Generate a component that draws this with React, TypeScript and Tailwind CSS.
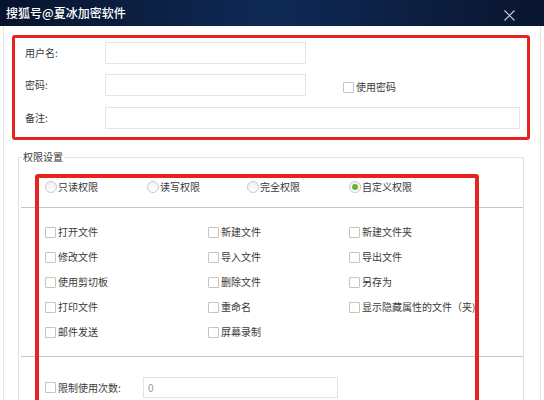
import React from "react";

const font = { fontFamily: '"Noto Sans CJK SC", "Noto Sans", sans-serif' };

function Box() {
  return <span className="inline-block w-[11px] h-[11px] border border-[#c4c4c4] bg-white shrink-0 rounded-[1px]" />;
}

function Check({ label }: { label: string }) {
  return (
    <label className="flex items-center gap-[2px] text-[10px] leading-[14px] text-[#3a3a3a]">
      <Box />
      <span>{label}</span>
    </label>
  );
}

function Radio({ label, checked = false }: { label: string; checked?: boolean }) {
  return (
    <label className="flex items-center gap-[1px] text-[10px] leading-[14px] text-[#3a3a3a]">
      <span className="w-[12px] h-[12px] rounded-full border border-[#c8c8c8] bg-gradient-to-b from-[#f2f2f2] to-white flex items-center justify-center shrink-0">
        {checked && <span className="w-[6px] h-[6px] rounded-full bg-[#6bb03f]" />}
      </span>
      <span>{label}</span>
    </label>
  );
}

const rows: string[][] = [
  ["打开文件", "新建文件", "新建文件夹"],
  ["修改文件", "导入文件", "导出文件"],
  ["使用剪切板", "删除文件", "另存为"],
  ["打印文件", "重命名", "显示隐藏属性的文件（夹)"],
  ["邮件发送", "屏幕录制", ""],
];

export default function App() {
  return (
    <div className="w-[544px] h-[400px] overflow-hidden bg-white" style={font}>
      {/* title bar */}
      <div className="h-[26px] flex items-center justify-between pl-[6px] pr-[29px] bg-gradient-to-r from-[#08142d] via-[#0f2a57] to-[#09152e]">
        <span className="text-white text-[12px] leading-[14px] font-medium">搜狐号@夏冰加密软件</span>
        <svg width="11" height="11" viewBox="0 0 11 11" className="mt-[4px]">
          <path d="M0.5 0.5 L10.5 10.5 M10.5 0.5 L0.5 10.5" stroke="#c9d1dc" strokeWidth="1.1" />
        </svg>
      </div>

      {/* body */}
      <div className="relative mx-[3px] h-[374px] pt-[9px] border-x border-[#e6e6e6]">
        {/* account fields (highlighted) */}
        <div className="ml-[8px] w-[518px] h-[105px] border-[3px] border-[#e6231e] rounded-[3px] pl-[10px] pt-[4px]">
          <div className="flex items-center">
            <span className="w-[80px] text-[10px] leading-[14px] text-[#3a3a3a]">用户名:</span>
            <div className="w-[201px] h-[22px] border border-[#e4e4e4]" />
          </div>
          <div className="flex items-center mt-[10px]">
            <span className="w-[80px] text-[10px] leading-[14px] text-[#3a3a3a]">密码:</span>
            <div className="w-[201px] h-[22px] border border-[#e4e4e4]" />
            <div className="ml-[37px] mt-[4px]">
              <Check label="使用密码" />
            </div>
          </div>
          <div className="flex items-center mt-[11px]">
            <span className="w-[80px] text-[10px] leading-[14px] text-[#3a3a3a]">备注:</span>
            <div className="w-[415px] h-[22px] border border-[#e4e4e4]" />
          </div>
        </div>

        {/* permissions group */}
        <div className="ml-[14px] mt-[10px] w-[506px]">
          <div className="flex items-center h-[14px]">
            <div className="w-[4px] border-t border-[#e2e2e2]" />
            <span className="px-[1px] text-[10px] leading-[14px] text-[#3a3a3a]">权限设置</span>
            <div className="flex-1 border-t border-[#e2e2e2]" />
          </div>
          <div className="-mt-[7px] h-[260px] border-x border-b border-[#e2e2e2]">
            <div className="flex pl-[26px] pt-[23px] h-[50px]">
              <div className="w-[102px]"><Radio label="只读权限" /></div>
              <div className="w-[100px]"><Radio label="读写权限" /></div>
              <div className="w-[102px]"><Radio label="完全权限" /></div>
              <div><Radio label="自定义权限" checked /></div>
            </div>
            <div className="ml-[2px] border-t border-[#c6c6c6]" />
            <div className="pl-[26px] pt-[17px] h-[148px] flex flex-col gap-[11px]">
              {rows.map((r, i) => (
                <div key={i} className="flex">
                  <div className="w-[163px]"><Check label={r[0]} /></div>
                  <div className="w-[141px]"><Check label={r[1]} /></div>
                  {r[2] && <Check label={r[2]} />}
                </div>
              ))}
            </div>
            <div className="ml-[2px] border-t border-[#c6c6c6]" />
            <div className="pl-[26px] pt-[20px] flex items-center">
              <div className="w-[98px]"><Check label="限制使用次数:" /></div>
              <div className="w-[195px] h-[21px] border border-[#e4e4e4] text-[10px] leading-[19px] text-[#999] pl-[4px]">0</div>
            </div>
          </div>
        </div>

        {/* annotation over the permission list */}
        <div className="absolute left-[31px] top-[148px] w-[444px] h-[240px] border-[4px] border-[#e6231e] rounded-[3px] pointer-events-none" />
      </div>
    </div>
  );
}
